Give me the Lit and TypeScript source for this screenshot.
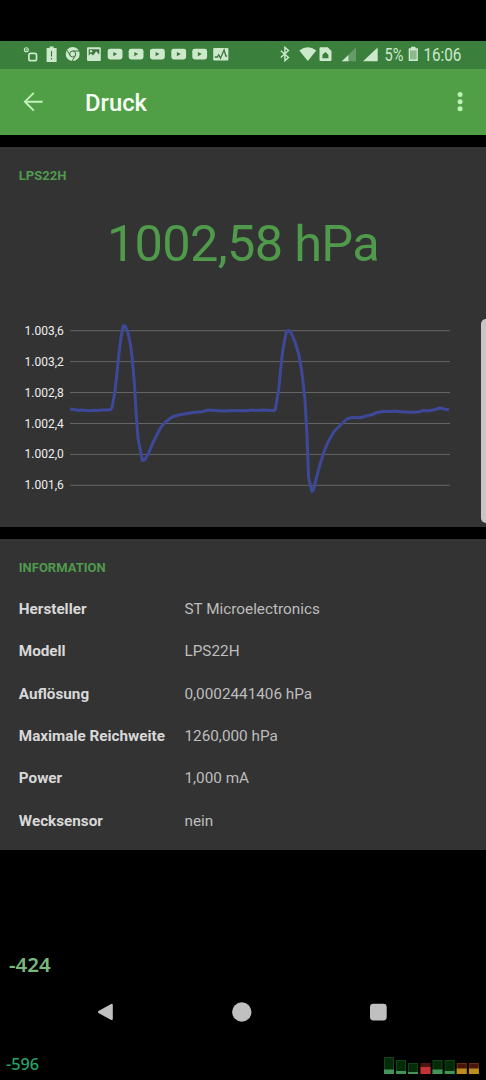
import { LitElement, html, svg, css } from "lit";
import { customElement } from "lit/decorators.js";

const rows: [string, string][] = [
  ["Hersteller", "ST Microelectronics"],
  ["Modell", "LPS22H"],
  ["Auflösung", "0,0002441406 hPa"],
  ["Maximale Reichweite", "1260,000 hPa"],
  ["Power", "1,000 mA"],
  ["Wecksensor", "nein"],
];

const ticks: [string, number][] = [
  ["1.003,6", 330.7],
  ["1.003,2", 361.6],
  ["1.002,8", 392.5],
  ["1.002,4", 423.5],
  ["1.002,0", 454.4],
  ["1.001,6", 485.3],
];

const curve =
  "70,409 74,409.6 78,410.2 82,409.9 86,410.6 90,410.8 94,410.2 98,410.5 102,409.9 106,410.1 110,409.8 112,408 115,391 117,373 119,353 121,337 123.3,325.7 125.5,326.5 128,333 130.5,345 132.5,361 134.5,385 136,412 138,438 140.5,451 142.3,460.5 145,459.5 148,454.5 151.5,446 156,436.5 161,427 166,421.5 173,416.5 180,414.7 188,413.3 195,412.3 202,411.7 208,410 216,410.6 224,411 232,410.5 240,410.8 246,410.8 251,410.1 256,410.4 262,410.1 268,410.3 274,410.8 275.5,409 279,387 281,365 283,349 286.3,332 288.5,330.3 291,332.5 295,342 299,355 302,373 305,400 307,435 308.5,477 310,484 312,491.5 313.5,490 316,479.5 319,468 323.5,453 328,442 334,431.5 341,424.5 347,419 352,417.4 360,417.7 366,416 371,415 377,412.5 384,411.3 390,411.4 395,410.9 402,411.8 410,412.3 418,412.1 424,410.4 428,411 434,409.7 440,408 445,409.3 449,409.8";

const videos = [107.7, 128.7, 150, 171.3, 192.3];

const meters: [number, number, number, string][] = [
  [384.5, 1057.5, 4.5, "g"],
  [396.5, 1060.5, 3, "g"],
  [408.5, 1063.5, 2, "g"],
  [421, 1063.5, 7, "r"],
  [433, 1060.5, 4.5, "g"],
  [445.2, 1060.5, 3, "g"],
  [457.2, 1063.5, 5.5, "y"],
  [469.4, 1063.5, 5.5, "y"],
];

@customElement("status-bar")
class StatusBar extends LitElement {
  static styles = css`
    :host { display: flex; justify-content: space-between; height: 28px; background: #3b7f3c; }
    svg { display: block; flex: none; }
    .ink { fill: #cde9cc; }
    .dark { fill: #3f7640; }
    .line { fill: none; stroke: #cde9cc; }
    .darkline { fill: none; stroke: #3f7640; }
    .dim { fill: #679c68; }
    .label { font-family: Roboto, sans-serif; font-size: 17.6px; fill: #cde9cc; }
  `;
  render() {
    return html`
      <svg width="240" height="28" viewBox="0 41 240 28">
        <circle class="line" cx="26.3" cy="49.7" r="2" stroke-width="1.1" />
        <circle class="ink" cx="26.3" cy="49.7" r=".8" />
        <rect class="line" x="28.9" y="53.4" width="7.6" height="7.3" rx="1.8" stroke-width="1.7" />
        <path class="ink" d="M46.6 48h3V46.4h4V48h3v14h-10z" />
        <path class="darkline" d="M51.5 51v5.4M51.5 58v1.6" stroke-width="1.1" />
        <circle class="ink" cx="72.7" cy="54" r="7" />
        <circle class="darkline" cx="72.7" cy="54" r="3" stroke-width="1" />
        <path class="darkline" d="M72.7 51h6.3M70.1 55.5l-3.2-5.4M75.3 55.5l-3.1 5.4" stroke-width="1" />
        <rect class="ink" x="87" y="47.3" width="13.8" height="13.6" rx="1" />
        <path class="dark" d="M88.7 49.2h10.6v5.6l-3.1-3.6-3.1 4.3-2.4-1.9-2 2.2z" />
        <circle class="ink" cx="91" cy="51.3" r="1.2" />
        ${videos.map(
          (x) => svg`<rect class="ink" x=${x} y="48.8" width="14.8" height="10.6" rx="2.4" />
            <path class="dark" transform="translate(${x} 0)" d="M5.6 51.9l3.9 2.2-3.9 2.2z" />`,
        )}
        <rect class="ink" x="213.2" y="48" width="15.2" height="12.6" rx="1" />
        <path class="darkline" d="M214.8 57h2.6l1.3-2.2 1.8 3.4 3.6-8.2 1.7 6h1.4" stroke-width="1.3" />
      </svg>
      <svg width="216" height="28" viewBox="270 41 216 28">
        <path class="line" d="M280.8 50.7l7.7 6.8-3.6 3.1V47.4l3.6 3.2-7.7 6.9" stroke-width="1.4" />
        <path class="ink" d="M299.3 50.4Q307.8 44 316.3 50.4L307.8 61z" />
        <path class="ink" fill-rule="evenodd" d="M319.5 48.3q0-1 1-1h7.2l3.8 3.7v9q0 1-1 1h-10q-1 0-1-1zM325.4 52l-3 2.8v3.4h6v-3.4z" />
        <path class="dim" d="M356 47.5V61.3H341.8z" />
        <path class="ink" d="M348.4 55v6.3H341.8z" />
        <path class="ink" d="M377.7 47.5V61.3H363z" />
        <text class="label" x="384.4" y="61" textLength="19" lengthAdjust="spacingAndGlyphs">5%</text>
        <path class="ink" d="M408.7 48.3h2.4v-1.5h4.4v1.5h2.4V61h-9.2z" />
        <rect x="410" y="50.4" width="6.6" height="9" fill="#8cba8b" />
        <text class="label" x="423.4" y="61" textLength="38" lengthAdjust="spacingAndGlyphs">16:06</text>
      </svg>
    `;
  }
}

@customElement("app-root")
class AppRoot extends LitElement {
  static styles = css`
    :host {
      display: flex; flex-direction: column; position: relative; box-sizing: border-box;
      width: 486px; height: 1080px; padding-top: 41px; overflow: hidden;
      background: #000; font-family: Roboto, sans-serif;
    }
    svg { display: block; flex: none; }
    .bar { display: flex; align-items: center; height: 66px; background: #509e46; }
    .title { flex: 1; font-size: 23.8px; font-weight: 500; color: #f8fff6; line-height: 66px; padding-top: 1px; }
    .arrow { fill: none; stroke: #c4f3bd; stroke-width: 1.9; }
    .dots { fill: #bdf2b6; }
    .card { background: #333; box-sizing: border-box; }
    .sensor { margin-top: 12px; height: 380px; }
    .info { margin-top: 12px; height: 311px; }
    .head { font-size: 13px; font-weight: 700; color: #509a4e; line-height: 20px; padding: 19px 0 0 18.8px; }
    .value { font-size: 50.5px; letter-spacing: -0.68px; line-height: 60px; text-align: center; color: #509a4b; margin-top: 28px; }
    .chart { margin-top: 36px; }
    .grid { stroke: #656565; stroke-width: 1; }
    .tick { font-size: 12px; fill: #efefef; text-anchor: end; }
    .curve { fill: none; stroke: #3e4899; stroke-width: 3; stroke-linejoin: round; }
    .rows { display: grid; grid-template-columns: 165.7px 1fr; grid-auto-rows: 42.3px; align-items: center; padding: 10px 0 0 18.8px; }
    .key { font-size: 15.25px; font-weight: 700; color: #d8d8d8; }
    .val { font-size: 15.3px; color: #bdbdbd; }
    .scroll { position: absolute; right: -6px; top: 319px; width: 11px; height: 204px; border-radius: 5px; background: #c6c4c5; }
    .foot { flex: 1; display: flex; flex-direction: column; font-family: "Noto Sans", sans-serif; }
    .current { font-size: 20.5px; font-weight: 600; line-height: 28px; color: #79b77b; padding: 100px 0 0 9px; }
    .nav { display: flex; margin-top: 14px; }
    .bottom { display: flex; justify-content: space-between; margin-top: 12px; }
    .small { font-size: 16.3px; font-weight: 500; line-height: 22px; color: #24a36a; padding: 9px 0 0 6px; }
    .g .shell { fill: #052b08; stroke: #124518; }
    .g .level { fill: #43935a; }
    .r .shell { fill: #4a1512; stroke: #4a1512; }
    .r .level { fill: #c63337; }
    .y .shell { fill: #4b1408; stroke: #68320f; }
    .y .level { fill: #bc8d1e; }
  `;
  render() {
    return html`
      <status-bar></status-bar>
      <div class="bar">
        <svg width="85" height="66" viewBox="0 69 85 66">
          <path class="arrow" d="M42.6 101.7H25M33.8 92.8L24.9 101.7l8.9 8.9" />
        </svg>
        <div class="title">Druck</div>
        <svg width="52" height="66" viewBox="434 69 52 66">
          <g class="dots"><circle cx="460.1" cy="94.5" r="2.5" /><circle cx="460.1" cy="101.7" r="2.5" /><circle cx="460.1" cy="108.8" r="2.5" /></g>
        </svg>
      </div>
      <div class="card sensor">
        <div class="head">LPS22H</div>
        <div class="value">1002,58 hPa</div>
        <svg class="chart" width="486" height="190" viewBox="0 310 486 190">
          ${ticks.map(
            ([t, y]) => svg`<line class="grid" x1="70" x2="450" y1=${y} y2=${y} />
              <text class="tick" x="63.8" y=${y + 4}>${t}</text>`,
          )}
          <polyline class="curve" points=${curve} />
        </svg>
      </div>
      <div class="card info">
        <div class="head">INFORMATION</div>
        <div class="rows">
          ${rows.map(([k, v]) => html`<div class="key">${k}</div><div class="val">${v}</div>`)}
        </div>
      </div>
      <div class="foot">
        <div class="current">-424</div>
        <svg class="nav" width="486" height="40" viewBox="0 992 486 40">
          <path d="M99 1012l12.7-7v14z" fill="#c0c0c0" stroke="#c0c0c0" stroke-width="2.2" stroke-linejoin="round" />
          <circle cx="241.8" cy="1012" r="9.7" fill="#c0c0c0" />
          <rect x="370" y="1003.7" width="16.7" height="16.7" rx="3.4" fill="#c0c0c0" />
        </svg>
        <div class="bottom">
          <div class="small">-596</div>
          <svg width="110" height="36" viewBox="376 1044 110 36">
            ${meters.map(
              ([x, y, h, k]) => svg`<g class=${k}>
                <rect class="shell" x=${x} y=${y} width="9" height=${1073.5 - y} />
                <rect class="level" x=${x - 0.5} y=${1074 - h} width="10" height=${h} /></g>`,
            )}
          </svg>
        </div>
      </div>
      <div class="scroll"></div>
    `;
  }
}
